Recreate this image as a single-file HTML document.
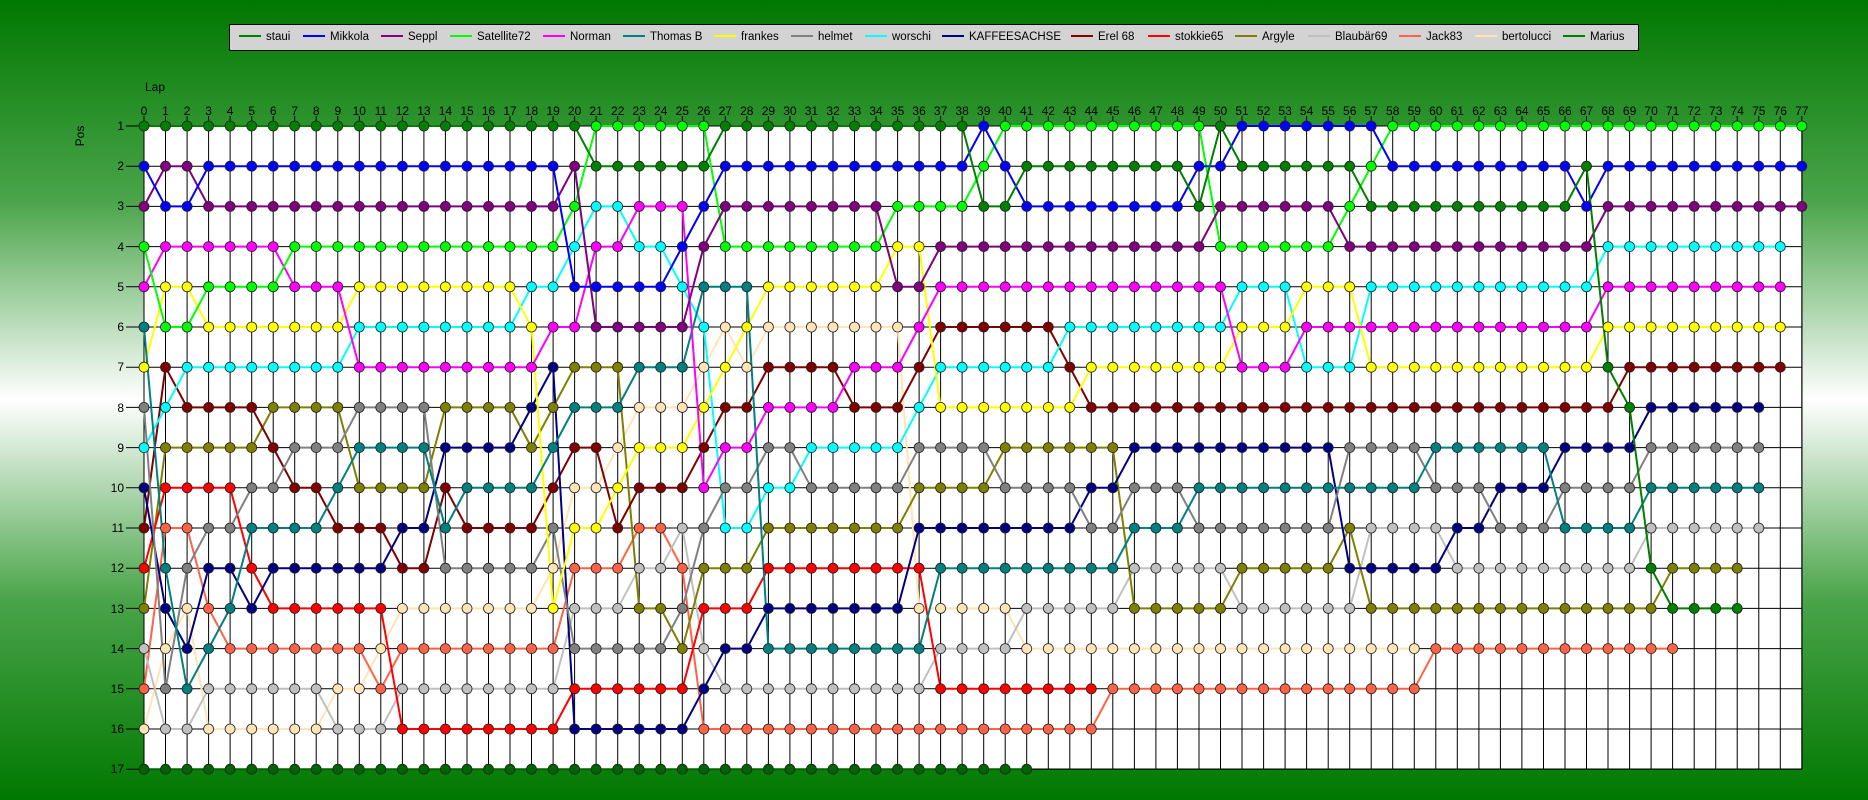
<!DOCTYPE html>
<html><head><meta charset="utf-8">
<style>
html,body{margin:0;padding:0;}
body{width:1868px;height:800px;overflow:hidden;position:relative;
background:linear-gradient(to bottom,#007800 0%,#4aa44a 25%,#ffffff 50%,#4aa44a 75%,#007800 100%);
font-family:"Liberation Sans",sans-serif;}
#legend{position:absolute;left:229px;top:24px;width:1408px;height:25px;background:#d3d3d3;border:1px solid #000;}
.it{position:absolute;top:0;height:25px;font-size:11.5px;line-height:25px;color:#000;white-space:nowrap;}
.it i{display:inline-block;width:22px;height:2px;vertical-align:middle;margin-right:5px;position:relative;top:-1px;}
svg{position:absolute;left:0;top:0;}
</style></head><body>
<div id="legend">
<div class="it" style="left:9px"><i style="background:#008000"></i>staui</div>
<div class="it" style="left:73px"><i style="background:#0000ff"></i>Mikkola</div>
<div class="it" style="left:151px"><i style="background:#800080"></i>Seppl</div>
<div class="it" style="left:220px"><i style="background:#00ff00"></i>Satellite72</div>
<div class="it" style="left:313px"><i style="background:#ff00ff"></i>Norman</div>
<div class="it" style="left:393px"><i style="background:#008080"></i>Thomas B</div>
<div class="it" style="left:484px"><i style="background:#ffff00"></i>frankes</div>
<div class="it" style="left:561px"><i style="background:#808080"></i>helmet</div>
<div class="it" style="left:635px"><i style="background:#00ffff"></i>worschi</div>
<div class="it" style="left:712px"><i style="background:#000080"></i>KAFFEESACHSE</div>
<div class="it" style="left:841px"><i style="background:#800000"></i>Erel 68</div>
<div class="it" style="left:918px"><i style="background:#ff0000"></i>stokkie65</div>
<div class="it" style="left:1005px"><i style="background:#808000"></i>Argyle</div>
<div class="it" style="left:1078px"><i style="background:#c0c0c0"></i>Blaubär69</div>
<div class="it" style="left:1169px"><i style="background:#ff6347"></i>Jack83</div>
<div class="it" style="left:1245px"><i style="background:#ffe4b5"></i>bertolucci</div>
<div class="it" style="left:1333px"><i style="background:#008000"></i>Marius</div>
</div>
<svg id="s" width="1868" height="800" xmlns="http://www.w3.org/2000/svg" font-family="Liberation Sans, sans-serif" font-size="12">
<rect x="144" y="126" width="1658" height="643" fill="#fff"/>
<g id="grid" stroke="#000" stroke-width="1"></g>
<g id="lines" fill="none" stroke-width="2"></g>
<g id="marks" stroke="#222" stroke-width="0.8"></g>
<text x="145" y="91" text-anchor="start">Lap</text>
<text transform="translate(84,136) rotate(-90)" text-anchor="middle">Pos</text>
<g text-anchor="end">
<text x="124" y="130">1</text><text x="124" y="170">2</text><text x="124" y="210">3</text><text x="124" y="251">4</text><text x="124" y="291">5</text><text x="124" y="331">6</text><text x="124" y="371">7</text><text x="124" y="412">8</text><text x="124" y="452">9</text><text x="124" y="492">10</text><text x="124" y="532">11</text><text x="124" y="572">12</text><text x="124" y="613">13</text><text x="124" y="653">14</text><text x="124" y="693">15</text><text x="124" y="733">16</text><text x="124" y="773">17</text>
</g>
<g text-anchor="middle">
<text x="144.0" y="115">0</text><text x="165.5" y="115">1</text><text x="187.1" y="115">2</text><text x="208.6" y="115">3</text><text x="230.1" y="115">4</text><text x="251.7" y="115">5</text><text x="273.2" y="115">6</text><text x="294.7" y="115">7</text><text x="316.2" y="115">8</text><text x="337.8" y="115">9</text><text x="359.3" y="115">10</text><text x="380.8" y="115">11</text><text x="402.4" y="115">12</text><text x="423.9" y="115">13</text><text x="445.4" y="115">14</text><text x="467.0" y="115">15</text><text x="488.5" y="115">16</text><text x="510.0" y="115">17</text><text x="531.5" y="115">18</text><text x="553.1" y="115">19</text><text x="574.6" y="115">20</text><text x="596.1" y="115">21</text><text x="617.7" y="115">22</text><text x="639.2" y="115">23</text><text x="660.7" y="115">24</text><text x="682.3" y="115">25</text><text x="703.8" y="115">26</text><text x="725.3" y="115">27</text><text x="746.8" y="115">28</text><text x="768.4" y="115">29</text><text x="789.9" y="115">30</text><text x="811.4" y="115">31</text><text x="833.0" y="115">32</text><text x="854.5" y="115">33</text><text x="876.0" y="115">34</text><text x="897.6" y="115">35</text><text x="919.1" y="115">36</text><text x="940.6" y="115">37</text><text x="962.1" y="115">38</text><text x="983.7" y="115">39</text><text x="1005.2" y="115">40</text><text x="1026.7" y="115">41</text><text x="1048.3" y="115">42</text><text x="1069.8" y="115">43</text><text x="1091.3" y="115">44</text><text x="1112.9" y="115">45</text><text x="1134.4" y="115">46</text><text x="1155.9" y="115">47</text><text x="1177.4" y="115">48</text><text x="1199.0" y="115">49</text><text x="1220.5" y="115">50</text><text x="1242.0" y="115">51</text><text x="1263.6" y="115">52</text><text x="1285.1" y="115">53</text><text x="1306.6" y="115">54</text><text x="1328.2" y="115">55</text><text x="1349.7" y="115">56</text><text x="1371.2" y="115">57</text><text x="1392.7" y="115">58</text><text x="1414.3" y="115">59</text><text x="1435.8" y="115">60</text><text x="1457.3" y="115">61</text><text x="1478.9" y="115">62</text><text x="1500.4" y="115">63</text><text x="1521.9" y="115">64</text><text x="1543.5" y="115">65</text><text x="1565.0" y="115">66</text><text x="1586.5" y="115">67</text><text x="1608.0" y="115">68</text><text x="1629.6" y="115">69</text><text x="1651.1" y="115">70</text><text x="1672.6" y="115">71</text><text x="1694.2" y="115">72</text><text x="1715.7" y="115">73</text><text x="1737.2" y="115">74</text><text x="1758.8" y="115">75</text><text x="1780.3" y="115">76</text><text x="1801.8" y="115">77</text>
</g>
</svg>
<script>
(function(){
var NS="http://www.w3.org/2000/svg";
function X(l){return 144+l*21.53;}
function Y(p){return 126+(p-1)*40.2;}
var laps=["abcdefghijklmnopq","acbegdkimlofjphnq","acbegdikmlohpjfnq","abcedgikmlhjofnpq","abcedgikmlhjfonpq","abcedgikmhfljonpq","abcedgimkhfjlonpq","abcdegimhkfjlonpq","abcdegimhkfjlonpq","abcdegimhfkjlopnq",
"abcdgiehfmkjlopnq","abcdgiehfmkjlponq","abcdgiehfmjkponlq","abcdgiehfmjkponlq","abcdgiemjkfhponlq","abcdgiemjfkhponlq","abcdgiemjfkhponlq","abcdgiemjfkhponlq","abcdigejmfkhponlq","abcdiejmfkhpgonlq",
"acdibemfkpgonhljq","daiebcmfkpgonhljq","daiebcmfpgkonhljq","daeibcfpgkonmhljq","daeibcfpgkonmhljq","daebicfpgknohmljq","dabcfipgkehmlnjoq","abcdfpgkehimljnoq","abcdfgpkehimljnoq","abcdgpkehimljfnoq",
"abcdgpkehimljfnoq","abcdgpkeihmljfnoq","abcdgpkeihmljfnoq","abcdgpekihmljfnoq","abcdgpekihmljfnoq","abdgcpekihmljfnoq","abdgcekihmjlpfnoq","abdcekighmjfpnloq","abdcekighmjfpnloq","bdacekighmjfpnloq",
"dbacekigmhjfpnloq","dabcekigmhjfnploq","dabcekigmhjfnplo.","dabceikgmhjfnplo.","dabceigkmjhfnplo.","dabceigkmjhfnpo..","dabceigkjhfnmpo..","dabceigkjhfnmpo..","dabceigkjhfnmpo..","dbaceigkjfhnmpo..",
"abcdeigkjfhnmpo..","bacdigekjfhmnpo..","bacdigekjfhmnpo..","bacdigekjfhmnpo..","bacdgeikjfhmnpo..","bacdgeikjfhmnpo..","badcgeikhfmjnpo..","bdaciegkhfnjmpo..","dbaciegkhfnjmpo..","dbaciegkhfnjmpo..",
"dbaciegkfhnjmo...","dbaciegkfhjnmo...","dbaciegkfhjnmo...","dbaciegkfjhnmo...","dbaciegkfjhnmo...","dbaciegkfjhnmo...","dbaciegkjhfnmo...","dabciegkjhfnmo...","dbciegakjhfnmo...","dbciegkajhfnmo...",
"dbciegkjhfnamo...","dbciegkjhfnmao...","dbciegkjhfnma....","dbciegkjhfnma....","dbciegkjhfnma....","dbciegkjhfn......","dbciegk..........","dbc.............."];
var col={a:"#008000",b:"#0000ff",c:"#800080",d:"#00ff00",e:"#ff00ff",f:"#008080",g:"#ffff00",h:"#808080",i:"#00ffff",j:"#000080",k:"#800000",l:"#ff0000",m:"#808000",n:"#c0c0c0",o:"#ff6347",p:"#ffe4b5",q:"#006400"};
var grid=document.getElementById("grid"),lines=document.getElementById("lines"),marks=document.getElementById("marks");
function el(t,a,p){var e=document.createElementNS(NS,t);for(var k in a)e.setAttribute(k,a[k]);p.appendChild(e);return e;}
for(var l=0;l<=77;l++){var x=X(l).toFixed(1);el("line",{x1:x,y1:116,x2:x,y2:769},grid);}
for(var p=1;p<=17;p++){var y=Y(p).toFixed(1);el("line",{x1:126,y1:y,x2:1802,y2:y},grid);}
el("rect",{x:144,y:126,width:1658,height:643,fill:"none"},grid);
var series={};
for(var l=0;l<laps.length;l++){var s=laps[l];for(var r=0;r<17;r++){var c=s.charAt(r);if(c==".")continue;(series[c]=series[c]||[]).push([l,r+1]);}}
var order="qponmlkjihgfedcba";
for(var i=0;i<order.length;i++){var c=order[i],pts=series[c];if(!pts)continue;
 var d=pts.map(function(q){return X(q[0]).toFixed(1)+","+Y(q[1]).toFixed(1);}).join(" ");
 el("polyline",{points:d,stroke:col[c]},lines);}
for(var i=0;i<order.length;i++){var c=order[i],pts=series[c];if(!pts)continue;
 pts.forEach(function(q){el("circle",{cx:X(q[0]).toFixed(1),cy:Y(q[1]).toFixed(1),r:5,fill:col[c]},marks);});}
})();
</script>
</body></html>
